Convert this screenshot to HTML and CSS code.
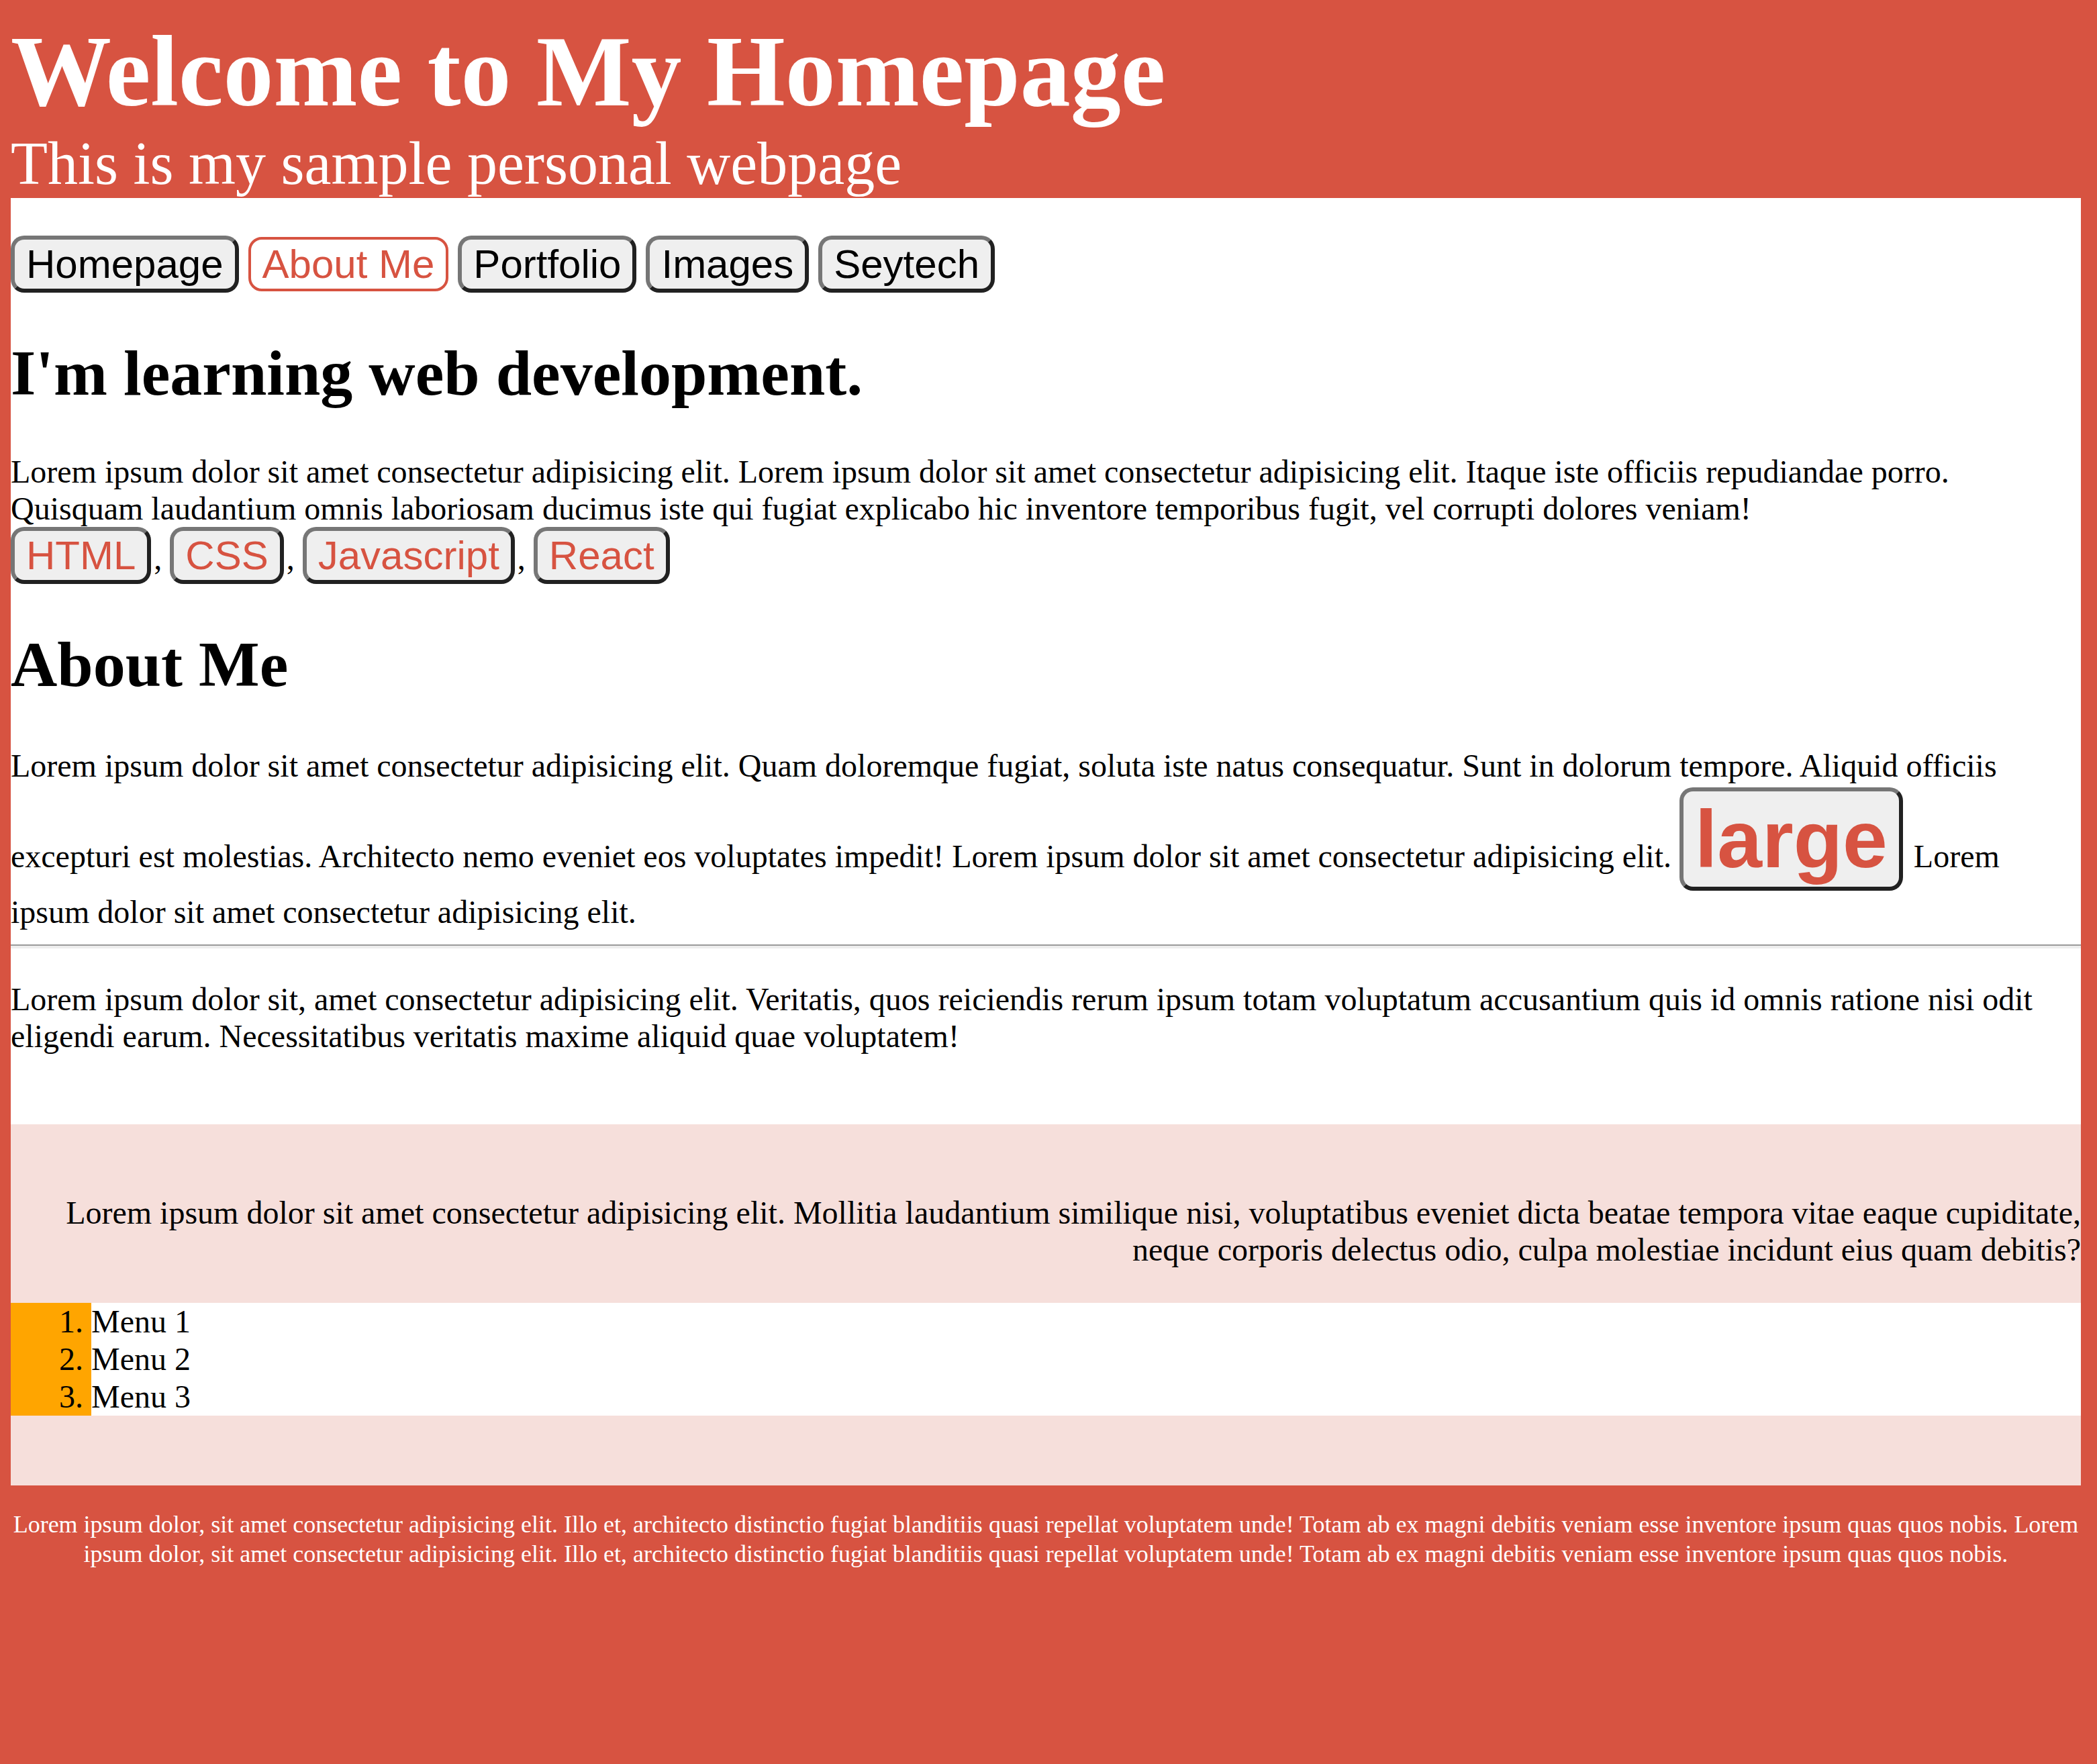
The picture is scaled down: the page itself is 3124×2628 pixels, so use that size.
FILE: index.html
```html
<!DOCTYPE html>
<html lang="en">
<head>
<meta charset="utf-8">
<title>Welcome to My Homepage</title>
<link rel="stylesheet" href="styles.css">
</head>
<body>
<header class="site-header">
  <h1 class="site-title">Welcome to My Homepage</h1>
  <p class="site-subtitle">This is my sample personal webpage</p>
</header>
<main class="content">
  <nav class="nav">
    <button class="btn">Homepage</button>
    <button class="btn btn-active">About Me</button>
    <button class="btn">Portfolio</button>
    <button class="btn">Images</button>
    <button class="btn">Seytech</button>
  </nav>
  <h1 class="heading">I'm learning web development.</h1>
  <p class="text text-intro">Lorem ipsum dolor sit amet consectetur adipisicing elit. Lorem ipsum dolor sit amet consectetur adipisicing elit. Itaque iste officiis repudiandae porro. Quisquam laudantium omnis laboriosam ducimus iste qui fugiat explicabo hic inventore temporibus fugit, vel corrupti dolores veniam!<br><button class="btn btn-tag">HTML</button>, <button class="btn btn-tag">CSS</button>, <button class="btn btn-tag">Javascript</button>, <button class="btn btn-tag">React</button></p>
  <h1 class="heading">About Me</h1>
  <p class="text text-about">Lorem ipsum dolor sit amet consectetur adipisicing elit. Quam doloremque fugiat, soluta iste natus consequatur. Sunt in dolorum tempore. Aliquid officiis excepturi est molestias. Architecto nemo eveniet eos voluptates impedit! Lorem ipsum dolor sit amet consectetur adipisicing elit. <button class="btn btn-tag btn-large">large</button> Lorem ipsum dolor sit amet consectetur adipisicing elit.</p>
  <hr class="divider">
  <p class="text">Lorem ipsum dolor sit, amet consectetur adipisicing elit. Veritatis, quos reiciendis rerum ipsum totam voluptatum accusantium quis id omnis ratione nisi odit eligendi earum. Necessitatibus veritatis maxime aliquid quae voluptatem!</p>
</main>
<section class="highlight">
  <p class="text text-right">Lorem ipsum dolor sit amet consectetur adipisicing elit. Mollitia laudantium similique nisi, voluptatibus eveniet dicta beatae tempora vitae eaque cupiditate, neque corporis delectus odio, culpa molestiae incidunt eius quam debitis?</p>
  <ol class="menu">
    <li>Menu 1</li>
    <li>Menu 2</li>
    <li>Menu 3</li>
  </ol>
</section>
<footer class="site-footer">
  <p class="footer-text">Lorem ipsum dolor, sit amet consectetur adipisicing elit. Illo et, architecto distinctio fugiat blanditiis quasi repellat voluptatem unde! Totam ab ex magni debitis veniam esse inventore ipsum quas quos nobis. Lorem ipsum dolor, sit amet consectetur adipisicing elit. Illo et, architecto distinctio fugiat blanditiis quasi repellat voluptatem unde! Totam ab ex magni debitis veniam esse inventore ipsum quas quos nobis.</p>
</footer>
</body>
</html>
```

FILE: styles.css
```css
html {
  background: #d75341;
}

body {
  margin: 16px 24px 16px 16px;
  background: #d75341;
  color: #000;
  font-family: "Liberation Serif", "Times New Roman", Times, serif;
  font-size: 32px;
}

.site-header {
  color: #fff;
  padding-top: 4px;
}

.site-title {
  margin: 0;
  font-size: 150px;
  font-weight: bold;
  line-height: normal;
}

.site-subtitle {
  margin: 0;
  font-size: 90px;
  line-height: normal;
}

.content {
  background: #fff;
  padding: 56px 0;
}

.nav {
  font-size: 32px;
}

.btn {
  font-family: "Liberation Sans", Arial, Helvetica, sans-serif;
  font-size: 60px;
  line-height: normal;
  padding: 2px 17px;
  margin: 0 6px 0 0;
  border-style: solid;
  border-width: 6px;
  border-color: #767676 #212121 #212121 #767676;
  border-radius: 20px;
  background: #efefef;
  color: #000;
  vertical-align: baseline;
}

.btn-active {
  border: 4px solid #d75341;
  background: #fff;
  color: #d75341;
}

.btn-tag {
  color: #d75341;
  margin-right: 4px;
}

.btn-large {
  font-size: 120px;
  font-weight: bold;
}

.heading {
  font-size: 96px;
  font-weight: bold;
  margin: 64px 0;
  line-height: normal;
}

.text {
  font-size: 48px;
  margin: 48px 0;
  line-height: normal;
}

.text-about {
  line-height: 64px;
  margin-bottom: 0;
}

.divider {
  margin: 16px 0;
  border: 0;
  border-top: 2px solid #9a9a9a;
  border-bottom: 4px solid #eeeeee;
  height: 0;
}

.highlight {
  background: #f6dfdb;
  padding: 56px 0;
}

.text-right {
  text-align: right;
}

.menu {
  margin: 52px 0 48px;
  padding-left: 120px;
  background: #ffa500;
  font-size: 48px;
  line-height: 56px;
}

.menu li {
  background: #fff;
}

.site-footer {
  color: #fff;
  text-align: center;
}

.footer-text {
  margin: 36px 0;
  font-size: 36px;
  line-height: 44px;
}
```
